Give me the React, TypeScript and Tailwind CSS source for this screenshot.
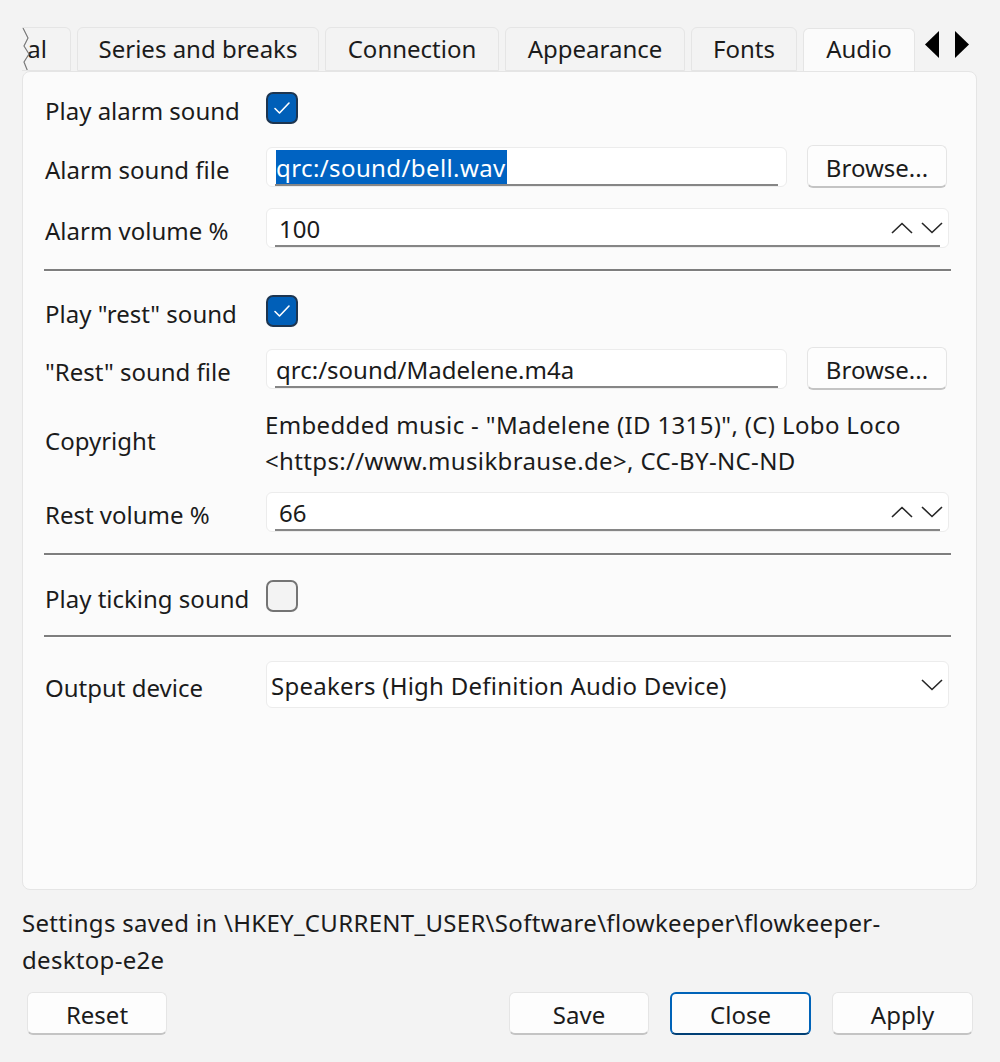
import React from 'react';

const font = { fontFamily: '"Noto Sans", "Open Sans", Arial, sans-serif' };

function Tab({ label, width, active }: { label: string; width: string; active?: boolean }) {
  return (
    <div
      className={
        'flex items-center justify-center border border-[#e5e5e5] rounded-t-[6px] ' +
        width +
        (active ? ' h-[43px] bg-[#fbfbfb] border-b-0 pb-[3px]' : ' h-[44px] bg-[#f3f3f3]')
      }
    >
      {label}
    </div>
  );
}

function Checkbox({ checked }: { checked?: boolean }) {
  if (checked) {
    return (
      <div className="w-[32px] h-[32px] rounded-[7px] bg-[#005fb8] border-[2px] border-[#1d3550] flex items-center justify-center">
        <svg width="18" height="14" viewBox="0 0 18 14" fill="none">
          <path d="M2 7.5 L6.5 12 L16 2" stroke="#ffffff" strokeWidth="1.6" strokeLinecap="round" strokeLinejoin="round" />
        </svg>
      </div>
    );
  }
  return <div className="w-[32px] h-[32px] rounded-[7px] bg-[#f3f3f3] border-[2px] border-[#747474]" />;
}

function Chevron({ up }: { up?: boolean }) {
  return (
    <svg width="22" height="12" viewBox="0 0 22 12" fill="none">
      <path
        d={up ? 'M1 11 L11 1.5 L21 11' : 'M1 1 L11 10.5 L21 1'}
        stroke="#262626"
        strokeWidth="1.6"
      />
    </svg>
  );
}

function Button({ label, width, focused }: { label: string; width: string; focused?: boolean }) {
  return (
    <div
      className={
        'relative h-[43px] flex items-center justify-center rounded-[6px] bg-[#fdfdfd] ' +
        width +
        (focused ? ' border-[2px] border-[#0063b8] border-b-[#003f75]' : ' border border-[#e5e5e5] border-b-[#c4c4c4] border-b-2')
      }
    >
      <span className="pt-[3px]">{label}</span>
    </div>
  );
}

function LineEdit({ children, className }: { children: React.ReactNode; className?: string }) {
  return (
    <div className={'relative h-[40px] bg-white border border-[#ececec] rounded-[6px] flex items-center ' + (className || '')}>
      {children}
      <div className="absolute left-[8px] right-[8px] bottom-[0px] h-[2px] bg-[#868686]" />
    </div>
  );
}

function Separator() {
  return (
    <div className="w-[907px] -ml-[1px]">
      <div className="h-[2px] bg-[#7e7e7e]" />
      <div className="h-[1px] bg-white" />
    </div>
  );
}

function Row({ label, children, className }: { label: string; children: React.ReactNode; className?: string }) {
  return (
    <div className={'flex items-center ' + (className || '')}>
      <div className="w-[221px] shrink-0 pt-[6px] whitespace-nowrap">{label}</div>
      <div className="flex-1 flex items-center">{children}</div>
    </div>
  );
}

export default function App() {
  return (
    <div className="w-[1000px] h-[1062px] bg-[#f3f3f3] text-[#1b1b1b] text-[24px] overflow-hidden flex flex-col" style={font}>
      {/* tab bar */}
      <div className="flex items-end gap-[6px] pl-[22px] pt-[27px] h-[71px]">
        <div className="relative w-[49px] h-[44px] border border-l-0 border-[#e5e5e5] rounded-tr-[6px] bg-[#f3f3f3] overflow-hidden flex items-center justify-end pr-[23px]">
          <span>al</span>
          <svg className="absolute left-0 top-0" width="10" height="44" viewBox="0 0 10 44" fill="none">
            <path d="M0 0 L1 0 L6 10 L2 18 L7 26 L2 34 L6 44 L0 44 Z" fill="#f3f3f3" />
            <path d="M1 0 L6 10 L2 18 L7 26 L2 34 L6 44" stroke="#7a7a7a" strokeWidth="1.2" />
          </svg>
        </div>
        <Tab label="Series and breaks" width="w-[242px]" />
        <Tab label="Connection" width="w-[174px]" />
        <Tab label="Appearance" width="w-[180px]" />
        <Tab label="Fonts" width="w-[106px]" />
        <Tab label="Audio" width="w-[112px]" active />
        <div className="flex items-center gap-[16px] ml-[4px] h-[44px] pb-[10px]">
          <svg width="14" height="27" viewBox="0 0 14 27">
            <path d="M14 0 L0 13.5 L14 27 Z" fill="#000" />
          </svg>
          <svg width="14" height="27" viewBox="0 0 14 27">
            <path d="M0 0 L14 13.5 L0 27 Z" fill="#000" />
          </svg>
        </div>
      </div>

      {/* panel */}
      <div className="ml-[22px] w-[955px] h-[819px] bg-[#fbfbfb] border border-[#e5e5e5] rounded-[8px] pl-[22px] pr-[27px] pt-[16px]">
        <Row label="Play alarm sound" className="h-[40px]">
          <Checkbox checked />
        </Row>

        <Row label="Alarm sound file" className="h-[43px] mt-[17px]">
          <LineEdit className="w-[521px]">
            <span className="ml-[9px] h-[35px] mt-[2px] bg-[#0063c2] text-white flex items-center pr-[1px] tracking-[0.4px]">qrc:/sound/bell.wav</span>
          </LineEdit>
          <Button label="Browse..." width="w-[140px] ml-[20px]" />
        </Row>

        <Row label="Alarm volume %" className="h-[41px] mt-[19px]">
          <LineEdit className="flex-1 justify-between">
            <span className="ml-[12px] pt-[2px]">100</span>
            <div className="flex items-center gap-[8px] mr-[5px]">
              <Chevron up />
              <Chevron />
            </div>
          </LineEdit>
        </Row>

        <div className="mt-[21px]">
          <Separator />
        </div>

        <Row label={'Play "rest" sound'} className="h-[40px] mt-[19px]">
          <Checkbox checked />
        </Row>

        <Row label={'"Rest" sound file'} className="h-[41px] mt-[17px]">
          <LineEdit className="w-[521px]">
            <span className="ml-[9px] pt-[2px]">qrc:/sound/Madelene.m4a</span>
          </LineEdit>
          <Button label="Browse..." width="w-[140px] ml-[20px]" />
        </Row>

        <div className="flex items-center mt-[18px]">
          <div className="w-[221px] shrink-0 pb-[4px]">Copyright</div>
          <div className="leading-[36px] -ml-[1px] whitespace-nowrap tracking-[0.35px]">
            Embedded music - "Madelene (ID 1315)", (C) Lobo Loco
            <br />
            &lt;https://www.musikbrause.de&gt;, CC-BY-NC-ND
          </div>
        </div>

        <Row label="Rest volume %" className="h-[41px] mt-[12px]">
          <LineEdit className="flex-1 justify-between">
            <span className="ml-[12px] pt-[2px]">66</span>
            <div className="flex items-center gap-[8px] mr-[5px]">
              <Chevron up />
              <Chevron />
            </div>
          </LineEdit>
        </Row>

        <div className="mt-[21px]">
          <Separator />
        </div>

        <Row label="Play ticking sound" className="h-[40px] mt-[20px]">
          <Checkbox />
        </Row>

        <div className="mt-[19px]">
          <Separator />
        </div>

        <Row label="Output device" className="h-[47px] mt-[23px]">
          <div className="flex-1 h-[47px] bg-white border border-[#ececec] rounded-[6px] flex items-center justify-between">
            <span className="ml-[4px] pt-[2px] tracking-[0.25px]">Speakers (High Definition Audio Device)</span>
            <div className="mr-[5px]">
              <Chevron />
            </div>
          </div>
        </Row>
      </div>

      {/* status */}
      <div className="ml-[22px] mt-[14px] leading-[37px] whitespace-nowrap tracking-[0.3px]">
        Settings saved in \HKEY_CURRENT_USER\Software\flowkeeper\flowkeeper-
        <br />
        desktop-e2e
      </div>

      {/* buttons */}
      <div className="flex items-center mt-[14px] pl-[27px] pr-[27px]">
        <Button label="Reset" width="w-[140px]" />
        <div className="flex-1" />
        <div className="flex items-center gap-[21px]">
          <Button label="Save" width="w-[140px]" />
          <Button label="Close" width="w-[141px]" focused />
          <Button label="Apply" width="w-[141px]" />
        </div>
      </div>
    </div>
  );
}
